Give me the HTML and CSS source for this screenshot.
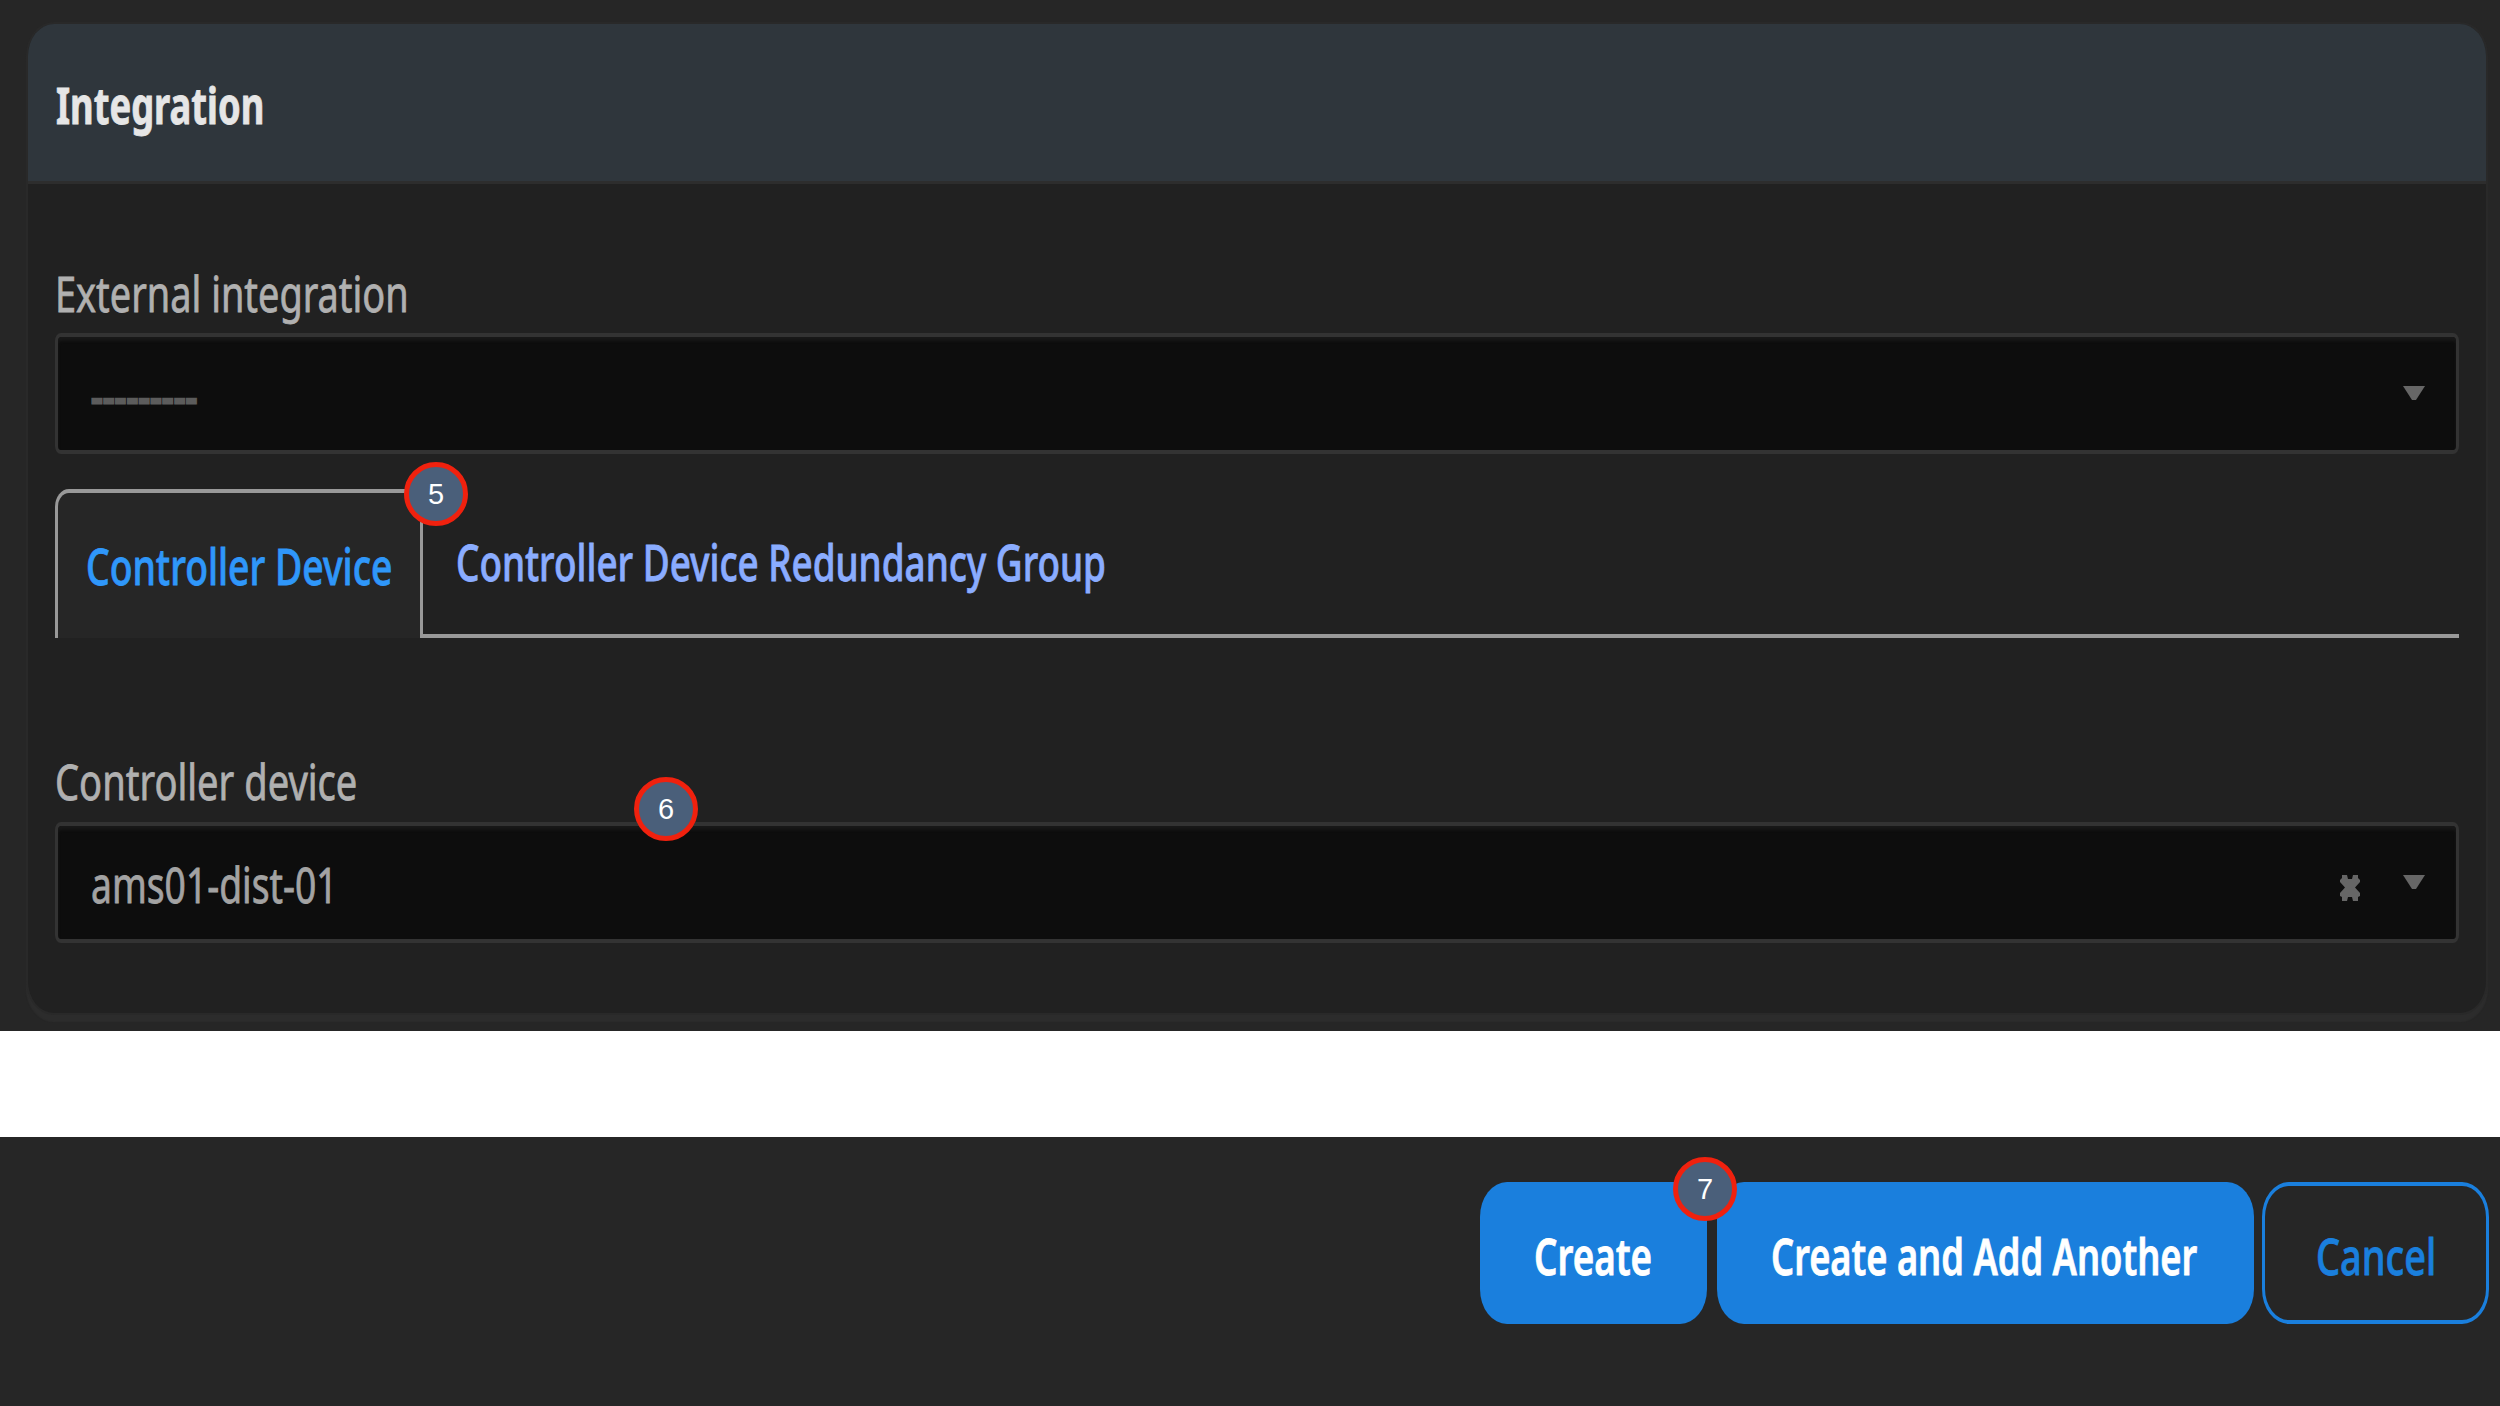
FILE: index.html
```html
<!DOCTYPE html>
<html lang="en">
<head>
<meta charset="utf-8">
<title>Integration</title>
<link rel="stylesheet" href="styles.css">
</head>
<body>
<main class="form-area">
  <section class="card">
    <header class="card-header"><h2 class="text title">Integration</h2></header>
    <div class="card-body">
      <label class="text label label-external">External integration</label>
      <div class="select">
        <span class="text placeholder">---------</span>
        <svg class="caret" viewBox="0 0 22 14"><path d="M0 0H22L13 14H9Z"/></svg>
      </div>
      <nav class="tabs">
        <a class="tab tab-active"><span class="text tab-text">Controller Device</span><span class="badge badge-tab">5</span></a>
        <a class="tab"><span class="text tab-text tab-text-group">Controller Device Redundancy Group</span></a>
      </nav>
      <label class="text label label-device">Controller device</label>
      <div class="select">
        <span class="text value">ams01-dist-01</span>
        <svg class="clear" viewBox="0 0 20 26"><path d="M2 0H7L8 4H12L13 0H18V3L20 5V7L15 12.500L20 18V21L18 22V26H13L12 22H8L7 26H2V22L0 21V18L5 12.500L0 7V5L2 3Z"/></svg>
        <svg class="caret" viewBox="0 0 22 14"><path d="M0 0H22L13 14H9Z"/></svg>
        <span class="badge badge-device">6</span>
      </div>
    </div>
  </section>
</main>
<footer class="actions">
  <button class="button create"><span class="text create-text">Create</span><span class="badge badge-create">7</span></button>
  <button class="button another"><span class="text another-text">Create and Add Another</span></button>
  <button class="button cancel"><span class="text cancel-text">Cancel</span></button>
</footer>
</body>
</html>
```
FILE: styles.css
```css
* { box-sizing: border-box; }

body {
  margin: 0;
  height: 1406px;
  display: flex;
  flex-direction: column;
  justify-content: space-between;
  overflow: hidden;
  background: #fff;
  font-family: "Noto Sans", sans-serif;
  font-size: 50px;
}

.form-area {
  height: 1031px;
  padding: 24px 14px 18px 28px;
  background: #262626;
}

.card {
  height: 989px;
  border-radius: 26px / 32px;
  background: #212121;
  box-shadow: 0 0 0 2px #292929, 0 7px 1px 2px #2c2c2c;
}

.card-header {
  height: 160px;
  padding: 51px 0 0 28px;
  border-bottom: 3px solid #2d2d2d;
  border-radius: 26px 26px 0 0 / 32px 32px 0 0;
  background: #2f363c;
}

.card-body { padding: 79px 27px 0; }

/* Condensed text: each string sets its own horizontal ratio. */
.text {
  display: block;
  width: max-content;
  margin: 0;
  line-height: 60px;
  white-space: nowrap;
  transform: scaleX(var(--ratio));
  transform-origin: 0 50%;
  -webkit-text-stroke: .8px currentColor;
}

.title { --ratio: .7262; color: #e6e6e6; font-size: 50px; font-weight: 700; }
.label { color: #b0b0b0; }
.label-external { --ratio: .758; margin-bottom: 10px; }
.label-device { --ratio: .762; margin: 113px 0 11px; }

.select {
  position: relative;
  display: flex;
  height: 121px;
  padding: 28px 31px 0 33px;
  border: solid #333;
  border-width: 4px 3px;
  border-radius: 6px / 8px;
  background: #0d0d0d;
  box-shadow: inset 0 4px 3px #181818;
}

.placeholder { --ratio: .7334; color: #5c5c5c; -webkit-text-stroke-width: 3px; }
.value { --ratio: .745; color: #a3a3a3; }

.caret {
  width: 22px;
  height: 14px;
  margin: 21px 0 0 auto;
  fill: #666;
}

.clear {
  width: 20px;
  height: 26px;
  margin: 21px 0 0 auto;
  fill: #666;
}

.clear + .caret { margin-left: 43px; }

.tabs {
  display: flex;
  height: 149px;
  margin-top: 35px;
  background: linear-gradient(#999, #999) right bottom / calc(100% - 368px) 4px no-repeat;
}

.tab { padding: 43px 0 0 33px; }

.tab-active {
  position: relative;
  width: 368px;
  padding: 43px 0 0 28px;
  border: solid #999;
  border-width: 4px 3px 0;
  border-radius: 14px 14px 0 0 / 18px 18px 0 0;
  background: #262626;
}

.tab-text { --ratio: .746; color: #2f97fa; font-weight: 500; }
.tab-text-group { --ratio: .7369; color: #8aacff; }

.actions {
  display: flex;
  justify-content: flex-end;
  height: 269px;
  padding: 45px 11px 0 0;
  background: #262626;
}

.button {
  position: relative;
  display: block;
  height: 142px;
  padding: 5px 0 0;
  border: 0;
  border-radius: 27px / 35px;
  background: #1a7fdd;
  color: #fff;
  font: 600 50px "Noto Sans", sans-serif;
}

.create { width: 227px; margin-right: 10px; padding-left: 54px; z-index: 1; }
.another { width: 537px; margin-right: 8px; padding-left: 54px; }
.cancel {
  width: 227px;
  padding-left: 51px;
  border: solid #1a7fdd;
  border-width: 4px 3px;
  background: none;
  color: #1a7fdd;
  font-weight: 500;
}

.create-text { --ratio: .7353; }
.another-text { --ratio: .7251; }
.cancel-text { --ratio: .7584; }

.badge {
  position: absolute;
  z-index: 2;
  width: 64px;
  height: 64px;
  border: 5px solid #f0210e;
  border-radius: 50%;
  background: #4a5f7a;
  color: #fff;
  font: 400 29px/54px "Liberation Sans", sans-serif;
  text-align: center;
}

.badge-tab { left: 346px; top: -31px; }
.badge-device { left: 576px; top: -49px; }
.badge-create { left: 193px; top: -25px; }
```
